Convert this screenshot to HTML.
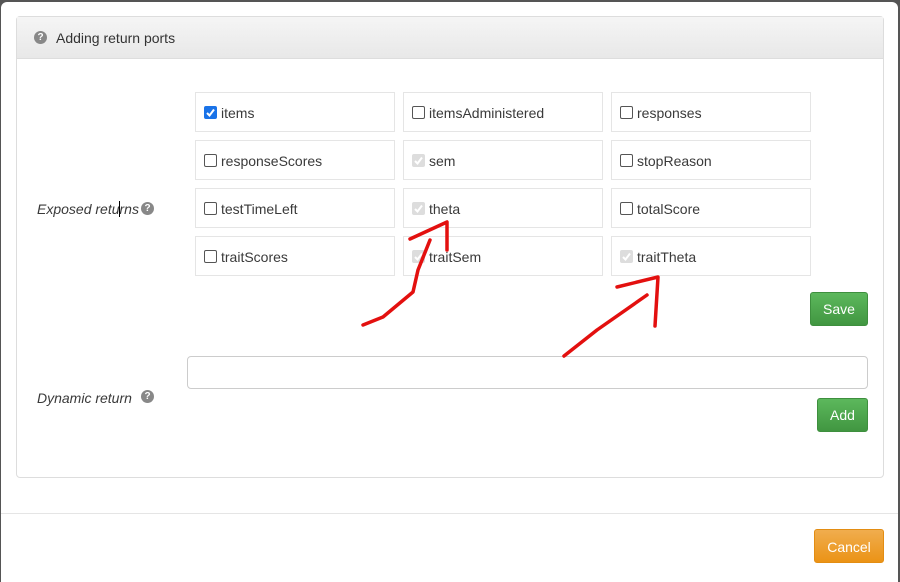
<!DOCTYPE html>
<html><head><style>
body{margin:0;width:900px;height:573px;background:#555;font-family:"Liberation Sans",sans-serif;position:relative;overflow:hidden}
.modal{position:absolute;left:1px;top:2px;width:897px;height:580px;background:#fff;border-radius:6px 6px 0 0}
.panel{position:absolute;left:15px;top:14px;width:866px;height:460px;border:1px solid #ddd;border-radius:4px}
.ph{height:41px;background:linear-gradient(#f5f5f5,#e8e8e8);border-bottom:1px solid #ddd;font-size:14px;color:#333;line-height:42px;padding-left:39px;position:relative}
.q{display:inline-block;width:13px;height:13px;border-radius:50%;background:#888;color:#fff;font-size:10px;font-weight:bold;text-align:center;line-height:13px;position:absolute}
.cell{position:absolute;width:198px;height:38px;border:1px solid #e5e5e5;font-size:14px;color:#3a3a3a;line-height:40px}
.cb{position:absolute;left:8px;top:13px;width:11px;height:11px;border:1px solid #555;border-radius:2px;background:#fff}
.cb.on{background:#1a73e8;border-color:#1a73e8}
.cb.dis{background:#ddd;border-color:#ddd}
.cb svg{position:absolute;left:0;top:0}
.cell span{position:absolute;left:25px}
.lbl{position:absolute;font-style:italic;font-size:14px;color:#3a3a3a}
.btn{position:absolute;color:#fff;font-size:14px;text-align:center;border-radius:3px}
.g{background:linear-gradient(#5cb85c,#419641);border:1px solid #3e8f3e}
</style></head><body>
<div class="modal">
<div class="panel">
<div class="ph"><span class="q" style="left:17px;top:14px">?</span>Adding return ports</div>
</div>
</div>
<div class="lbl" style="left:37px;top:201px">Exposed retu<span style="border-left:1px solid #000;margin-left:-1px"></span>rns</div>
<span class="q" style="left:141px;top:202px">?</span>
<div class="lbl" style="left:37px;top:390px">Dynamic return</div>
<span class="q" style="left:141px;top:390px">?</span>

<div class="cell" style="left:195px;top:92px"><i class="cb on"><svg width="11" height="11"><path d="M2 6l2.5 2.5L9 2.5" stroke="#fff" stroke-width="2" fill="none"/></svg></i><span>items</span></div>
<div class="cell" style="left:403px;top:92px"><i class="cb"></i><span>itemsAdministered</span></div>
<div class="cell" style="left:611px;top:92px"><i class="cb"></i><span>responses</span></div>
<div class="cell" style="left:195px;top:140px"><i class="cb"></i><span>responseScores</span></div>
<div class="cell" style="left:403px;top:140px"><i class="cb dis"><svg width="11" height="11"><path d="M2 6l2.5 2.5L9 2.5" stroke="#fff" stroke-width="2" fill="none"/></svg></i><span>sem</span></div>
<div class="cell" style="left:611px;top:140px"><i class="cb"></i><span>stopReason</span></div>
<div class="cell" style="left:195px;top:188px"><i class="cb"></i><span>testTimeLeft</span></div>
<div class="cell" style="left:403px;top:188px"><i class="cb dis"><svg width="11" height="11"><path d="M2 6l2.5 2.5L9 2.5" stroke="#fff" stroke-width="2" fill="none"/></svg></i><span>theta</span></div>
<div class="cell" style="left:611px;top:188px"><i class="cb"></i><span>totalScore</span></div>
<div class="cell" style="left:195px;top:236px"><i class="cb"></i><span>traitScores</span></div>
<div class="cell" style="left:403px;top:236px"><i class="cb dis"><svg width="11" height="11"><path d="M2 6l2.5 2.5L9 2.5" stroke="#fff" stroke-width="2" fill="none"/></svg></i><span>traitSem</span></div>
<div class="cell" style="left:611px;top:236px"><i class="cb dis"><svg width="11" height="11"><path d="M2 6l2.5 2.5L9 2.5" stroke="#fff" stroke-width="2" fill="none"/></svg></i><span>traitTheta</span></div>

<div class="btn g" style="left:810px;top:292px;width:56px;height:32px;line-height:32px">Save</div>
<div style="position:absolute;left:187px;top:356px;width:679px;height:31px;border:1px solid #ccc;border-radius:4px"></div>
<div class="btn g" style="left:817px;top:398px;width:49px;height:32px;line-height:32px">Add</div>
<div style="position:absolute;left:1px;top:513px;width:897px;border-top:1px solid #e5e5e5"></div>
<div class="btn" style="left:814px;top:529px;width:68px;height:32px;line-height:34px;background:linear-gradient(#f0ad4e,#eb9316);border:1px solid #e38d13">Cancel</div>

<svg style="position:absolute;left:0;top:0" width="900" height="573">
<g stroke="#e3100f" stroke-width="3.5" fill="none" stroke-linecap="round" stroke-linejoin="round">
<path d="M363 325L383 317L413 292L418 270L430 240"/>
<path d="M410 239L447 222L447 250"/>
<path d="M564 356L597 330L647 295"/>
<path d="M617 287L658 277L655 326"/>
</g></svg>
</body></html>
